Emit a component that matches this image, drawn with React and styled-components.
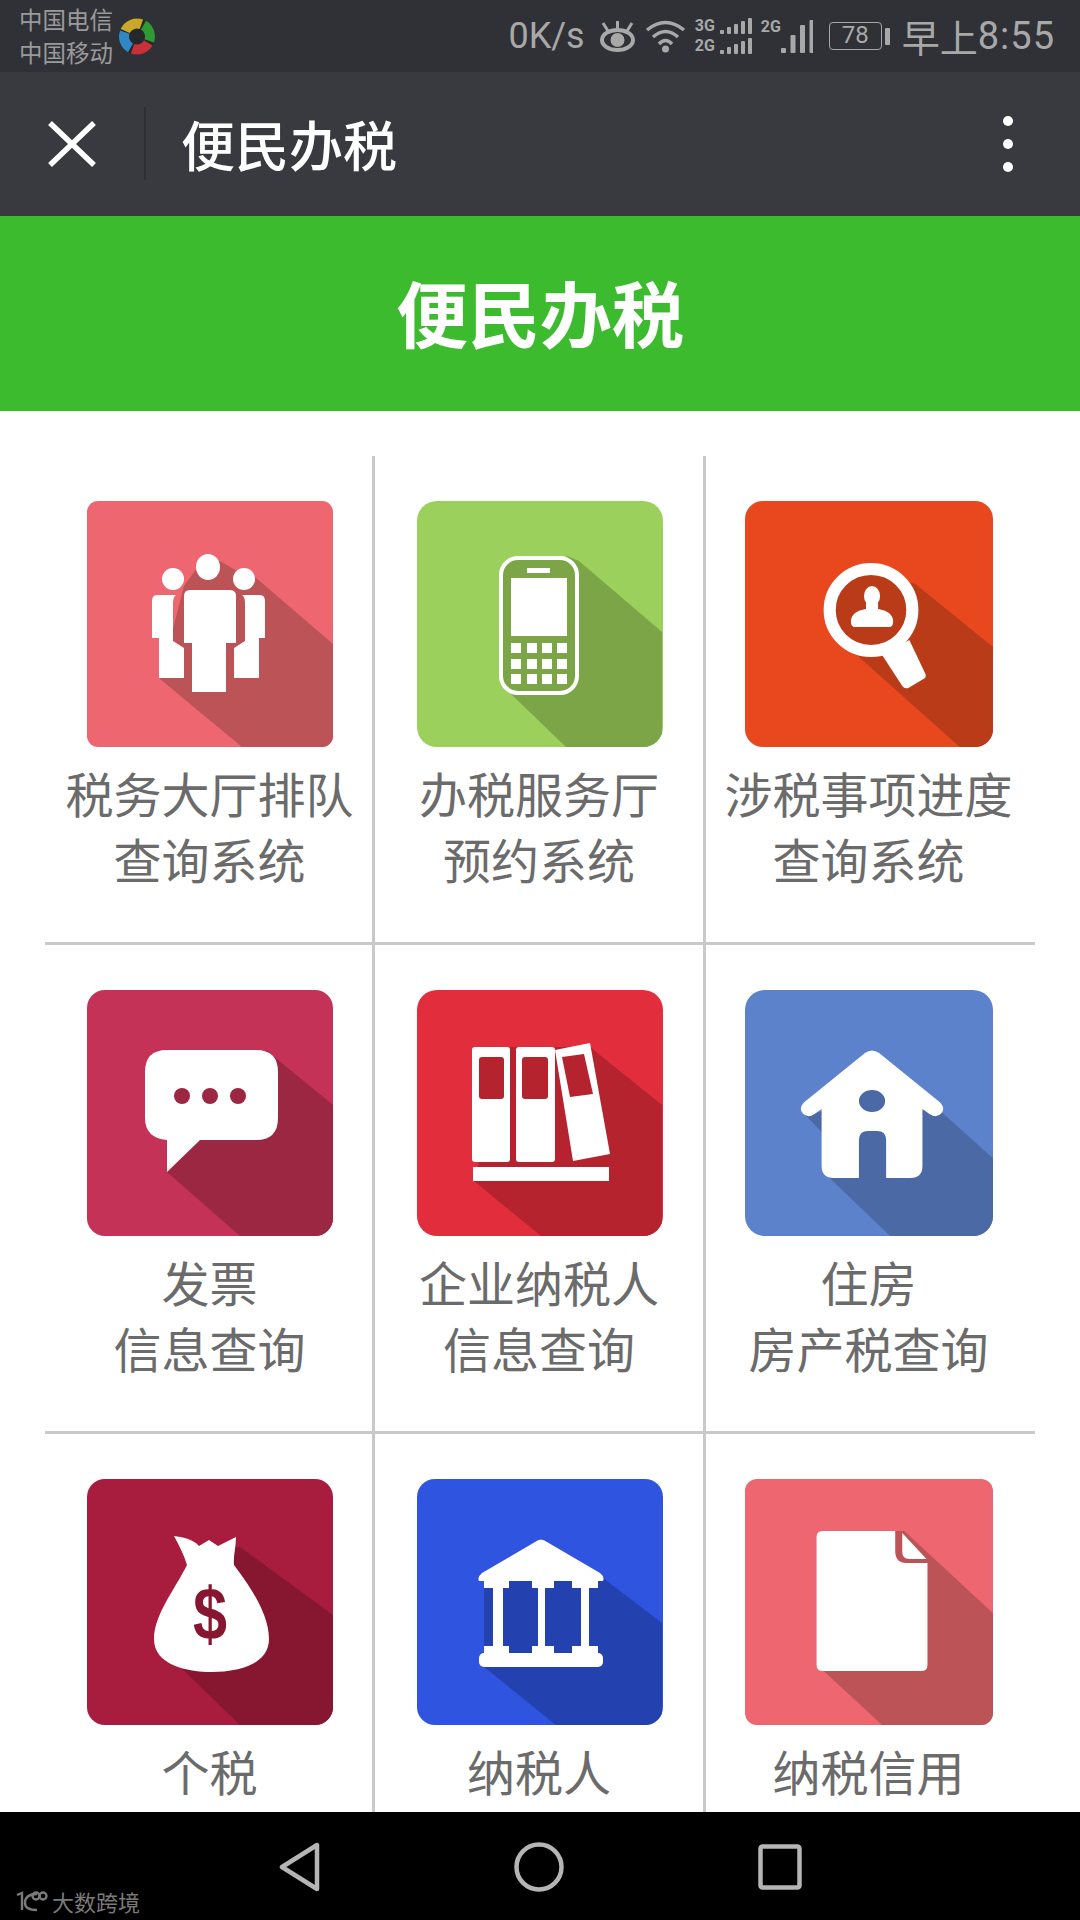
import React from 'react'
import styled, { createGlobalStyle } from 'styled-components'

const cjk = `"Noto Sans CJK SC", "Noto Sans", sans-serif`

const tiles = [
  { id: 'hall', label: ['税务大厅排队', '查询系统'], bg: '#ee6670', dark: '#bc5357', radius: 11 },
  { id: 'phone', label: ['办税服务厅', '预约系统'], bg: '#9bd05c', dark: '#7ca547', radius: 20 },
  { id: 'search', label: ['涉税事项进度', '查询系统'], bg: '#e9481f', dark: '#b93b17', radius: 18 },
  { id: 'chat', label: ['发票', '信息查询'], bg: '#c43257', dark: '#9b2743', radius: 18 },
  { id: 'books', label: ['企业纳税人', '信息查询'], bg: '#e12d3c', dark: '#b5232f', radius: 20 },
  { id: 'house', label: ['住房', '房产税查询'], bg: '#5c82cc', dark: '#4b69a5', radius: 20 },
  { id: 'money', label: ['个税'], bg: '#a81d3d', dark: '#871730', radius: 18 },
  { id: 'bank', label: ['纳税人'], bg: '#2e54e0', dark: '#2441b0', radius: 18 },
  { id: 'doc', label: ['纳税信用'], bg: '#ee6670', dark: '#bc5357', radius: 12 },
]

const Art = ({ id, dark }) => {
  switch (id) {
    case 'hall':
      return (
        <>
          <path fill={dark} d="M97 85L115 60H133L150 70L168 76L246 143V246H155L73 178Z" />
          <g fill="#fff">
            <ellipse cx="121" cy="66" rx="12" ry="13" />
            <ellipse cx="86" cy="78" rx="11" ry="11" />
            <ellipse cx="157" cy="78" rx="11" ry="11" />
            <path d="M103 89H143Q149 89 149 95V142H139V191H105V142H97V95Q97 89 103 89Z" />
            <path d="M70 94H89Q86 96 86 102V140L97 147V177H72V137H65V100Q65 94 70 94Z" />
            <path d="M155 94H173Q178 94 178 100V137H172V177H147V147L158 140V102Q158 96 155 94Z" />
          </g>
        </>
      )
    case 'phone':
      return (
        <>
          <path fill={dark} d="M150 55L162 60L245 131V246H149L94 193Z" />
          <rect x="84" y="57" width="76" height="135" rx="17" fill={dark} stroke="#fff" strokeWidth="4" />
          <g fill="#fff">
            <rect x="110" y="67" width="23" height="5" />
            <rect x="94" y="77" width="56" height="58" />
            {[142, 158, 173].map(y =>
              [94, 110, 125, 140].map(x => <rect key={`${x}-${y}`} x={x} y={y} width="10" height="10" />)
            )}
          </g>
        </>
      )
    case 'search':
      return (
        <>
          <path fill={dark} d="M125 70L169 83L246 146V246H213L113 156Z" />
          <circle cx="125" cy="109" r="41" fill={dark} stroke="#fff" strokeWidth="12" />
          <g fill="#fff">
            <path d="M136 154L163 139L179 173Q180 177 177 178L162 187Q158 188 156 185Z" />
            <ellipse cx="126" cy="95" rx="8" ry="10" />
            <path d="M120 102H132V108Q146 110 147 120Q147 126 143 126H109Q105 126 105 120Q106 110 120 108Z" />
          </g>
        </>
      )
    case 'chat':
      return (
        <>
          <path fill={dark} d="M113 150L180 60L191 70L246 115V246H153L80 182Z" />
          <path
            fill="#fff"
            d="M80 60H169Q191 60 191 82V128Q191 150 169 150H113L80 182V150Q58 148 58 128V82Q58 60 80 60Z"
          />
          <g fill={dark}>
            <circle cx="95" cy="106" r="8" />
            <circle cx="123" cy="106" r="8" />
            <circle cx="151" cy="106" r="8" />
          </g>
        </>
      )
    case 'books':
      return (
        <>
          <path fill={dark} d="M93 57H173L245 115V246H124L57 191Z" />
          <g fill="#fff">
            <rect x="55" y="57" width="38" height="115" rx="3" />
            <rect x="99" y="57" width="39" height="115" rx="3" />
            <path d="M138 60L173 53L193 164L156 171Z" />
            <rect x="56" y="177" width="136" height="14" />
          </g>
          <g fill={dark}>
            <rect x="62" y="67" width="25" height="42" rx="3" />
            <rect x="105" y="67" width="26" height="42" rx="3" />
            <path d="M145 67L167 64L176 104L153 107Z" />
          </g>
        </>
      )
    case 'house':
      return (
        <>
          <path fill={dark} d="M60 125L76 142L84 188L144 246H248V170L196 123L176 100Z" />
          <path
            fill="#fff"
            d="M119 63Q126 58 133 63L193 112Q199 118 195 123Q190 129 183 124L176 119V176Q176 188 164 188H140V150Q140 141 131 141H122Q113 141 113 150V188H88Q76 188 76 176V119L69 124Q62 129 57 123Q53 118 59 112Z"
          />
          <ellipse cx="126" cy="111" rx="13" ry="11" fill={dark} />
        </>
      )
    case 'money':
      return (
        <>
          <path fill={dark} d="M120 70L153 68L246 136V246H153L91 186Z" />
          <path
            fill="#fff"
            d="M87 57C95 58 106 60 112 67L122 61L131 67C137 64 143 61 149 58C149 68 146 78 147 86C165 110 182 136 182 160C182 186 150 193 125 193C100 193 67 186 67 160C67 136 88 110 100 86C97 76 92 66 87 57Z"
          />
          <MoneySign x="123" y="160" fill={dark} textLength="34" lengthAdjust="spacingAndGlyphs">$</MoneySign>
        </>
      )
    case 'bank':
      return (
        <>
          <path fill={dark} d="M124 60L186 99L245 144V246H139L67 188V100Z" />
          <g fill="#fff">
            <path d="M118 63Q124 58 130 63L183 94Q188 98 186 102H62Q60 98 65 94Z" />
            {[[67, 25], [115, 22], [155, 26]].map(([x, w]) => (
              <g key={x}>
                <rect x={x} y="101" width={w} height="8" />
                <rect x={x} y="167" width={w} height="8" />
              </g>
            ))}
            <rect x="76" y="105" width="10" height="66" />
            <rect x="121" y="105" width="7" height="66" />
            <rect x="164" y="105" width="8" height="66" />
            <rect x="62" y="174" width="124" height="14" rx="5" />
          </g>
        </>
      )
    default:
      return (
        <>
          <path fill={dark} d="M146 52H158L248 136V246H136L78 192Z" />
          <path
            fill="#fff"
            d="M77 52H149V72Q149 84 160 84H181V186Q181 192 175 192H77Q71 192 71 186V58Q71 52 77 52Z"
          />
          <path fill="#fff" d="M156 54L180 80H163Q156 80 156 73Z" />
        </>
      )
  }
}

const CarrierBall = () => (
  <svg width="38" height="39" viewBox="0 0 38 39" fill="none" strokeWidth="10">
    <circle cx="19" cy="19.5" r="18" fill="#26272b" stroke="none" />
    <path d="M7.2 14A13 13 0 0 1 23.4 7.3" stroke="#c8a72a" />
    <path d="M25.5 8.2A13 13 0 0 1 31.2 23.9" stroke="#2f9a34" />
    <path d="M30.3 26A13 13 0 0 1 14.6 31.7" stroke="#c8303a" />
    <path d="M12.5 30.8A13 13 0 0 1 6.8 15.1" stroke="#2f88c4" />
  </svg>
)

const EyeIcon = () => (
  <svg width="37" height="32" viewBox="0 0 37 32" fill="none" stroke="#a8a8a8">
    <ellipse cx="18.5" cy="20" rx="15.5" ry="10" strokeWidth="4" />
    <circle cx="18.5" cy="20" r="7" fill="#a8a8a8" stroke="none" />
    <path d="M18.5 1V8M4 3L9 11M33 3L28 11" strokeWidth="3" />
  </svg>
)

const WifiIcon = () => (
  <svg width="41" height="33" viewBox="0 0 41 33" fill="none" stroke="#a8a8a8" strokeWidth="3.5">
    <path d="M2 10Q20.5 -5 39 10" />
    <path d="M8 17Q20.5 6 33 17" />
    <path d="M14 24Q20.5 17 27 24" />
    <circle cx="20.5" cy="29" r="3.5" fill="#a8a8a8" stroke="none" />
  </svg>
)

const SignalBars = ({ heights, barWidth, step }) => {
  const tallest = Math.max(...heights)
  return (
    <svg width={barWidth + step * (heights.length - 1)} height={tallest} fill="#a8a8a8">
      {heights.map((h, i) => (
        <rect key={i} x={i * step} y={tallest - h} width={barWidth} height={h} rx="1" />
      ))}
    </svg>
  )
}

const smallBars = [4, 7, 10, 13, 16]

const DualSignal = () => (
  <SignalStack>
    <SignalRow>
      <SignalTag>3G</SignalTag>
      <SignalBars heights={smallBars} barWidth={4} step={7} />
    </SignalRow>
    <SignalRow>
      <SignalTag>2G</SignalTag>
      <SignalBars heights={smallBars} barWidth={4} step={7} />
    </SignalRow>
  </SignalStack>
)

const SingleSignal = () => (
  <SingleRow>
    <SignalTag>2G</SignalTag>
    <SignalBars heights={[5, 18, 28, 33]} barWidth={5} step={9.5} />
  </SingleRow>
)

const BackIcon = () => (
  <svg width="41" height="50" viewBox="0 0 41 50" fill="none">
    <path d="M38 3V47L3 25Z" stroke="#b5b5b5" strokeWidth="4.5" strokeLinejoin="round" />
  </svg>
)

const HomeIcon = () => (
  <svg width="50" height="50" viewBox="0 0 50 50" fill="none">
    <circle cx="25" cy="25" r="22.5" stroke="#b5b5b5" strokeWidth="4.5" />
  </svg>
)

const RecentIcon = () => (
  <svg width="44" height="46" viewBox="0 0 44 46" fill="none">
    <rect x="2.5" y="2.5" width="39" height="41" rx="2" stroke="#b5b5b5" strokeWidth="4.5" />
  </svg>
)

const WatermarkLogo = () => (
  <svg width="36" height="22" viewBox="0 0 36 22" fill="none" stroke="#7a7a7a" strokeWidth="2.4">
    <path d="M3 5L8 3V20" />
    <path d="M23 4Q11 4 11 13Q11 20 23 20" />
    <circle cx="22" cy="6" r="3.5" />
    <circle cx="29" cy="6" r="3.5" />
  </svg>
)

const App = () => (
  <Screen>
    <GlobalStyle />
    <StatusBar>
      <Carrier>
        <CarrierNames>
          <span>中国电信</span>
          <span>中国移动</span>
        </CarrierNames>
        <CarrierBall />
      </Carrier>
      <StatusRight>
        <Speed>0K/s</Speed>
        <EyeIcon />
        <WifiIcon />
        <DualSignal />
        <SingleSignal />
        <Battery>
          <BatteryBody>78</BatteryBody>
          <BatteryNub />
        </Battery>
        <Clock>
          <ClockHan>早上</ClockHan>8:55
        </Clock>
      </StatusRight>
    </StatusBar>

    <AppBar>
      <svg width="48" height="46" viewBox="0 0 48 46" stroke="#fff" strokeWidth="5.5">
        <path d="M2 2L46 44M46 2L2 44" />
      </svg>
      <BarDivider />
      <BarTitle>便民办税</BarTitle>
      <MoreDots>
        <Dot />
        <Dot />
        <Dot />
      </MoreDots>
    </AppBar>

    <Banner>便民办税</Banner>

    <Content>
      <MenuGrid>
        {tiles.map((tile, i) => (
          <Cell key={tile.id} $col={i % 3} $row={Math.floor(i / 3)}>
            <Tile $bg={tile.bg} $radius={tile.radius} $wide={i % 3 === 2}>
              <svg width="100%" height="100%" viewBox="0 0 246 246" preserveAspectRatio="none">
                <Art id={tile.id} dark={tile.dark} />
              </svg>
            </Tile>
            <Label $col={i % 3}>
              {tile.label.map(line => (
                <div key={line}>{line}</div>
              ))}
            </Label>
          </Cell>
        ))}
      </MenuGrid>
    </Content>

    <NavBar>
      <BackIcon />
      <HomeIcon />
      <RecentIcon />
      <Watermark>
        <WatermarkLogo />
        大数跨境
      </Watermark>
    </NavBar>
  </Screen>
)

export default App

const GlobalStyle = createGlobalStyle`
  html, body {
    margin: 0;
    padding: 0;
    background: #fff;
  }
  * {
    box-sizing: border-box;
  }
`

const Screen = styled.div`
  width: 1080px;
  height: 1920px;
  display: flex;
  flex-direction: column;
  overflow: hidden;
  font-family: ${cjk};
`

const StatusBar = styled.div`
  height: 72px;
  flex: none;
  background: #303136;
  display: flex;
  align-items: center;
  justify-content: space-between;
  padding: 0 25px 0 19px;
  color: #a8a8a8;
`

const Carrier = styled.div`
  display: flex;
  align-items: center;
  gap: 5px;
`

const CarrierNames = styled.div`
  display: flex;
  flex-direction: column;
  font-size: 23.5px;
  line-height: 33px;
  color: #9a9a9a;
`

const StatusRight = styled.div`
  display: flex;
  align-items: center;
  gap: 9px;
`

const Speed = styled.span`
  font-family: Roboto, sans-serif;
  font-size: 36px;
  line-height: 44px;
  white-space: nowrap;
  margin-right: 5px;
`

const SignalStack = styled.div`
  width: 57px;
  display: flex;
  flex-direction: column;
  gap: 4px;
`

const SignalRow = styled.div`
  display: flex;
  align-items: flex-end;
  justify-content: space-between;
  height: 16px;
`

const SingleRow = styled.div`
  width: 52px;
  height: 34px;
  display: flex;
  align-items: flex-end;
  justify-content: space-between;
`

const SignalTag = styled.span`
  font-family: Roboto, sans-serif;
  font-size: 16px;
  font-weight: 700;
  line-height: 16px;
  align-self: flex-start;
  white-space: nowrap;
`

const MoneySign = styled.text`
  font-family: "Liberation Sans", sans-serif;
  font-size: 74px;
  font-weight: 700;
  text-anchor: middle;
`

const Battery = styled.div`
  display: flex;
  align-items: center;
  gap: 3px;
  margin-left: 7px;
`

const BatteryBody = styled.div`
  width: 53px;
  height: 28px;
  border: 1.5px solid #a8a8a8;
  border-radius: 4px;
  font-family: Roboto, sans-serif;
  font-size: 24px;
  line-height: 25px;
  text-align: center;
`

const BatteryNub = styled.div`
  width: 5px;
  height: 17px;
  background: #a8a8a8;
  border-radius: 1px;
`

const Clock = styled.div`
  display: flex;
  align-items: center;
  font-family: Roboto, sans-serif;
  font-size: 38px;
  line-height: 44px;
  letter-spacing: 1px;
  margin-left: 3px;
`

const ClockHan = styled.span`
  font-family: ${cjk};
  letter-spacing: 0;
`

const AppBar = styled.div`
  height: 144px;
  flex: none;
  background: #393a3f;
  display: flex;
  align-items: center;
  padding: 0 0 1px 48px;
`

const BarDivider = styled.div`
  width: 2px;
  height: 73px;
  background: #2e2f33;
  margin-left: 48px;
`

const BarTitle = styled.div`
  font-size: 54px;
  font-weight: 500;
  line-height: 64px;
  color: #fff;
  margin-left: 35px;
  flex: 1;
`

const MoreDots = styled.div`
  display: flex;
  flex-direction: column;
  gap: 13px;
  margin-right: 67px;
`

const Dot = styled.div`
  width: 10px;
  height: 10px;
  border-radius: 50%;
  background: #fff;
`

const Banner = styled.div`
  height: 195px;
  flex: none;
  background: #3dbb2e;
  display: flex;
  align-items: center;
  justify-content: center;
  padding-bottom: 7px;
  color: #fff;
  font-size: 72px;
  font-weight: 700;
`

const Content = styled.div`
  flex: 1;
  min-height: 0;
  overflow: hidden;
  background: #fff;
  padding: 45px 45px 0;
`

const MenuGrid = styled.div`
  display: grid;
  grid-template-columns: 330px 331px 329px;
  grid-auto-rows: 489px;
`

const Cell = styled.div`
  display: flex;
  flex-direction: column;
  align-items: center;
  padding-top: 45px;
  padding-left: ${p => (p.$col < 2 ? 2 : 0)}px;
  padding-right: ${p => (p.$col === 2 ? 4 : 0)}px;
  border-right: ${p => (p.$col < 2 ? '3px solid #c9c9c9' : 'none')};
  border-bottom: ${p => (p.$row < 2 ? '3px solid #c9c9c9' : 'none')};
`

const Tile = styled.div`
  width: ${p => (p.$wide ? 248 : 246)}px;
  height: 246px;
  flex: none;
  border-radius: ${p => p.$radius}px;
  overflow: hidden;
  background: ${p => p.$bg};

  svg {
    display: block;
    filter: blur(0.5px);
  }
`

const Label = styled.div`
  margin-top: 12px;
  margin-left: ${p => (p.$col === 1 ? -2 : 0)}px;
  font-size: 48px;
  line-height: 66px;
  color: #6b6b6b;
  text-align: center;
  white-space: nowrap;
`

const NavBar = styled.div`
  position: relative;
  height: 108px;
  flex: none;
  background: #000;
  display: flex;
  align-items: center;
  justify-content: center;
  gap: 194px;
  padding-top: 2px;
`

const Watermark = styled.div`
  position: absolute;
  left: 14px;
  bottom: 6px;
  display: flex;
  align-items: center;
  gap: 2px;
  font-size: 22px;
  line-height: 26px;
  color: #7a7a7a;
`
